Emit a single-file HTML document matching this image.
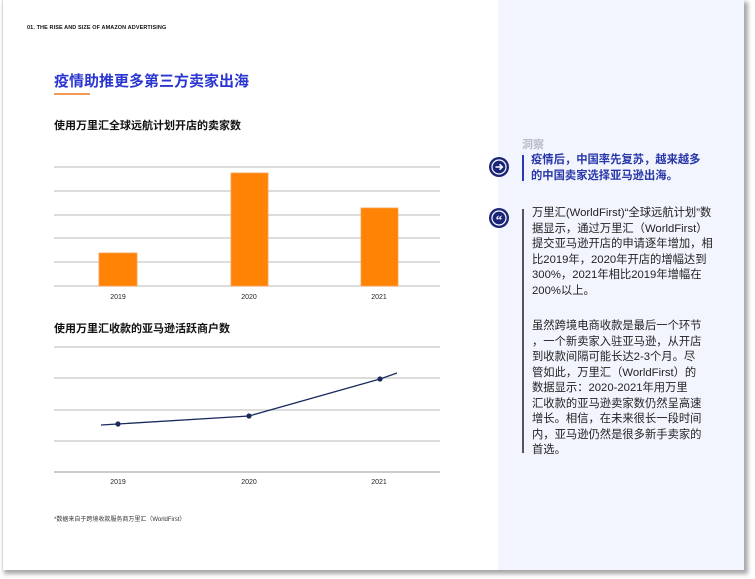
<!DOCTYPE html>
<html><head><meta charset="utf-8"><style>
*{margin:0;padding:0;box-sizing:border-box}
body{width:755px;height:579px;background:#fff;position:relative;overflow:hidden;font-family:"Liberation Sans","Noto Sans CJK SC",sans-serif}
.page{position:absolute;left:2px;top:0;width:742px;height:570px;background:#fff;border-left:1px solid #d8d8d8;box-shadow:3px 3px 4px 1px #a8a8a8}
.panel{position:absolute;left:498px;top:0;width:246px;height:570px;background:#f3f5fe}
.abs{position:absolute;white-space:nowrap}
.body{font-size:11.3px;line-height:15.5px;color:#222}
</style></head><body>
<div class="page"></div>
<div class="panel"></div>
<div class="abs" style="left:27px;top:25px;font-size:5.5px;font-weight:bold;color:#111;letter-spacing:0.1px">01. THE RISE AND SIZE OF AMAZON ADVERTISING</div>
<div class="abs" style="left:54px;top:70px;font-size:15px;font-weight:bold;color:#2a36d0">疫情助推更多第三方卖家出海</div>
<div class="abs" style="left:54px;top:93px;width:36px;height:2px;background:#f09a5a"></div>
<div class="abs" style="left:54px;top:117px;font-size:11px;font-weight:bold;color:#111">使用万里汇全球远航计划开店的卖家数</div>
<div class="abs" style="left:54px;top:320px;font-size:11px;font-weight:bold;color:#111">使用万里汇收款的亚马逊活跃商户数</div>
<svg class="abs" style="left:0;top:0" width="500" height="579">
<g stroke="#c8c8c8" stroke-width="1.3">
<line x1="54" y1="167" x2="440" y2="167"/><line x1="54" y1="191" x2="440" y2="191"/><line x1="54" y1="215" x2="440" y2="215"/><line x1="54" y1="238" x2="440" y2="238"/><line x1="54" y1="262" x2="440" y2="262"/><line x1="54" y1="286" x2="440" y2="286"/>
<line x1="54" y1="347" x2="440" y2="347"/><line x1="54" y1="378" x2="440" y2="378"/><line x1="54" y1="410" x2="440" y2="410"/><line x1="54" y1="441" x2="440" y2="441"/>
</g>
<line x1="54" y1="472" x2="440" y2="472" stroke="#999" stroke-width="1"/>
<g fill="#ff8304" stroke="#f9a050" stroke-width="0.8">
<rect x="99" y="253" width="38" height="33"/><rect x="231" y="173" width="37" height="113"/><rect x="361" y="208" width="37" height="78"/>
</g>
<polyline points="101,425 118,424 249,416 380,379 397,373" fill="none" stroke="#1b2a5c" stroke-width="1.3"/>
<g fill="#1b2a5c"><circle cx="118" cy="424" r="2.6"/><circle cx="249" cy="416" r="2.6"/><circle cx="380" cy="379" r="2.6"/></g>
<g font-size="7" fill="#222" text-anchor="middle" font-family="Liberation Sans,sans-serif">
<text x="118" y="299">2019</text><text x="249" y="299">2020</text><text x="379" y="299">2021</text>
<text x="118" y="484">2019</text><text x="249" y="484">2020</text><text x="379" y="484">2021</text>
</g>
</svg>
<div class="abs" style="left:54px;top:514px;font-size:6px;color:#333">*数据来自于跨境收款服务商万里汇（WorldFirst）</div>

<div class="abs" style="left:522px;top:136px;font-size:11px;font-weight:bold;color:#b8bcc8">洞察</div>
<div class="abs" style="left:522px;top:155px;width:1.5px;height:26px;background:#2a3bb0"></div>
<div class="abs" style="left:531px;top:153px;font-size:11.3px;line-height:15.5px;font-weight:bold;color:#2636a8">疫情后，中国率先复苏，越来越多<br>的中国卖家选择亚马逊出海。</div>
<svg class="abs" style="left:488px;top:156px" width="22" height="22"><circle cx="11" cy="11" r="10" fill="#1b2578"/><circle cx="11" cy="11" r="7" fill="none" stroke="#fff" stroke-width="1.2"/><path d="M7.5 11H14M11.5 8.3L14.3 11L11.5 13.7" fill="none" stroke="#fff" stroke-width="1.5"/></svg>
<svg class="abs" style="left:488px;top:207px" width="22" height="22"><circle cx="11" cy="11" r="10" fill="#1b2578"/><circle cx="11" cy="11" r="7" fill="none" stroke="#fff" stroke-width="1.2"/><text x="11" y="17" font-size="13" font-weight="bold" fill="#fff" text-anchor="middle" font-family="Liberation Serif,serif">“</text></svg>
<div class="abs" style="left:522px;top:209px;width:1.5px;height:244px;background:#555"></div>
<div class="abs body" style="left:532px;top:206px">万里汇(WorldFirst)“全球远航计划”数<br>据显示，通过万里汇（WorldFirst）<br>提交亚马逊开店的申请逐年增加，相<br>比2019年，2020年开店的增幅达到<br>300%，2021年相比2019年增幅在<br>200%以上。</div>
<div class="abs body" style="left:532px;top:319px">虽然跨境电商收款是最后一个环节<br>，一个新卖家入驻亚马逊，从开店<br>到收款间隔可能长达2-3个月。尽<br>管如此，万里汇（WorldFirst）的<br>数据显示：2020-2021年用万里<br>汇收款的亚马逊卖家数仍然呈高速<br>增长。相信，在未来很长一段时间<br>内，亚马逊仍然是很多新手卖家的<br>首选。</div>
</body></html>
